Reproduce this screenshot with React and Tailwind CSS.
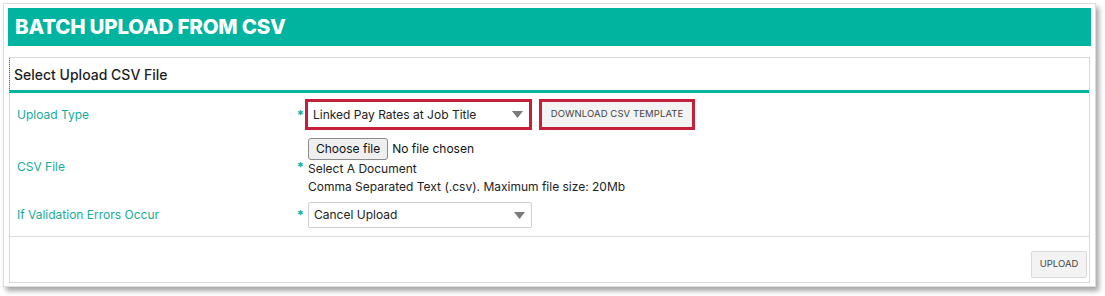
import React from "react";

const font = { fontFamily: "Inter, 'Liberation Sans', sans-serif" };

function Caret() {
  return (
    <svg width="11" height="7" viewBox="0 0 11 7" className="shrink-0">
      <path d="M0 0 L11 0 L5.5 7 Z" fill="#7a7a7a" />
    </svg>
  );
}

function Star() {
  return <span className="text-[13px] leading-none text-[#14b09e] font-bold">*</span>;
}

export default function App() {
  return (
    <div className="w-[1105px] h-[296px] bg-white pt-[3px] pl-[3px]" style={font}>
      <div className="w-[1093px] h-[284px] border border-[#dcdcdc] bg-white p-[4px] shadow-[3px_4px_5px_rgba(0,0,0,0.35)]">
        <div className="h-[38px] bg-[#00b49f] flex items-center pl-[7px]">
          <span className="text-white text-[20.5px] font-extrabold tracking-[-0.2px]">BATCH UPLOAD FROM CSV</span>
        </div>
        <div className="mt-[11px] mx-[1px] h-[226px] border border-[#d8d8d8] flex flex-col">
          <div className="h-[35px] -ml-px border-l border-l-[#0a8f80] [border-left-style:dotted] border-b-[3px] border-b-[#00b49f] flex items-center pl-[4px]">
            <span className="text-[14px] text-[#1e1e1e] font-medium">Select Upload CSV File</span>
          </div>
          <div className="border-b border-[#dcdcdc] pt-[6px] pb-[8px] flex flex-col">
            <div className="flex items-center">
              <div className="w-[287px] pl-[7px] text-[12px] text-[#17ab9b]">Upload Type</div>
              <div className="w-[7px] flex justify-end pt-[1px]"><Star /></div>
              <div className="ml-[1px] flex gap-[7px]">
                <div className="w-[227px] h-[31px] border-[3px] border-[#c41f3b] bg-white flex items-center justify-between pl-[5px] pr-[6px]">
                  <span className="text-[12px] text-[#222]">Linked Pay Rates at Job Title</span>
                  <Caret />
                </div>
                <div className="w-[156px] h-[31px] border-[3px] border-[#c41f3b] bg-[#f3f3f3] flex items-center justify-center">
                  <span className="text-[9.5px] text-[#444] tracking-[0.1px]">DOWNLOAD CSV TEMPLATE</span>
                </div>
              </div>
            </div>
            <div className="mt-[8px] flex items-center">
              <div className="w-[287px] pl-[7px] text-[12px] text-[#17ab9b]">CSV File</div>
              <div className="w-[7px] flex justify-end pt-[1px]"><Star /></div>
              <div className="ml-[4px] flex flex-col text-[12px] text-[#222]">
                <div className="flex items-center gap-[4px] h-[22px]">
                  <div className="h-[22px] px-[7px] border border-[#8a8a8a] rounded-[3px] bg-[#efefef] flex items-center text-[12px] text-[#111]">Choose file</div>
                  <span className="text-[12px] text-[#111]">No file chosen</span>
                </div>
                <div className="leading-[18px]">Select A Document</div>
                <div className="leading-[18px]">Comma Separated Text (.csv). Maximum file size: 20Mb</div>
              </div>
            </div>
            <div className="mt-[6px] flex items-center">
              <div className="w-[287px] pl-[7px] text-[12px] text-[#17ab9b]">If Validation Errors Occur</div>
              <div className="w-[7px] flex justify-end pt-[1px]"><Star /></div>
              <div className="ml-[4px] w-[224px] h-[26px] border border-[#cfcfcf] rounded-[2px] bg-white flex items-center justify-between pl-[5px] pr-[6px]">
                <span className="text-[12px] text-[#222]">Cancel Upload</span>
                <Caret />
              </div>
            </div>
          </div>
          <div className="flex-1 flex items-end justify-end pr-[2px] pb-[4px]">
            <div className="w-[56px] h-[27px] border border-[#dadada] rounded-[2px] bg-[#f3f3f3] flex items-center justify-center">
              <span className="text-[9.5px] text-[#444]">UPLOAD</span>
            </div>
          </div>
        </div>
      </div>
    </div>
  );
}
